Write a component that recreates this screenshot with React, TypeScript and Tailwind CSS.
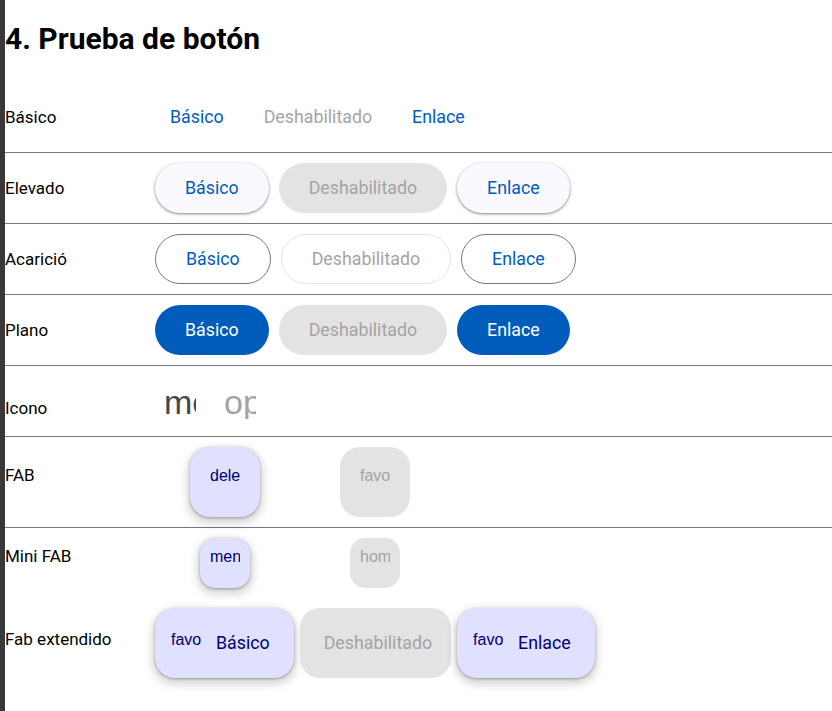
import type { ReactNode } from "react";

const ROBOTO = "font-['Roboto',sans-serif]";
const ICON_FONT = "font-['Liberation_Sans',Arial,sans-serif]";

function Row({ label, children, line = true }: { label: string; children: ReactNode; line?: boolean }) {
  return (
    <div className={line ? "flex items-baseline py-[10px] border-b border-[#77767b]" : "flex items-baseline py-[10px]"}>
      <div className="w-[150px] shrink-0 text-[17px] text-black">{label}</div>
      <div className="flex items-baseline gap-[10px]">{children}</div>
    </div>
  );
}

// material icon font is missing, so the ligature name shows clipped
function Icon({ name, size = "small" }: { name: string; size?: "small" | "big" | "ext" }) {
  if (size === "big")
    return <span className={`block w-[32px] h-[36px] shrink-0 [clip-path:inset(0)] whitespace-nowrap leading-[normal] text-[34px] ${ICON_FONT}`}>{name}</span>;
  if (size === "ext")
    return <span className={`block w-[30px] h-[30px] pt-[3px] shrink-0 [clip-path:inset(0)] whitespace-nowrap leading-[normal] text-[16px] ${ICON_FONT}`}>{name}</span>;
  return <span className={`block w-[30px] h-[30px] shrink-0 [clip-path:inset(0)] whitespace-nowrap leading-[normal] text-[16px] ${ICON_FONT}`}>{name}</span>;
}

const BTN = "inline-flex items-center justify-center h-[50px] rounded-full text-[17.8px] font-normal whitespace-nowrap";
const DISABLED_TEXT = "text-[#a4a4a6]";

function TextBtn({ children, disabled }: { children: ReactNode; disabled?: boolean }) {
  return <button className={`${BTN} px-[15px] ${disabled ? DISABLED_TEXT : "text-[#005cbb]"}`}>{children}</button>;
}

function ElevatedBtn({ children, disabled }: { children: ReactNode; disabled?: boolean }) {
  return disabled ? (
    <button className={`${BTN} px-[30px] bg-[#e3e3e3] ${DISABLED_TEXT}`}>{children}</button>
  ) : (
    <button className={`${BTN} px-[30px] bg-[#f9f9ff] text-[#005cbb] shadow-[0_1px_2px_rgba(0,0,0,0.3),0_1px_3px_1px_rgba(0,0,0,0.15)]`}>{children}</button>
  );
}

function StrokedBtn({ children, disabled }: { children: ReactNode; disabled?: boolean }) {
  return disabled ? (
    <button className={`${BTN} px-[30px] border border-[#e3e3e4] ${DISABLED_TEXT}`}>{children}</button>
  ) : (
    <button className={`${BTN} px-[30px] border border-[#74777f] text-[#005cbb]`}>{children}</button>
  );
}

function FlatBtn({ children, disabled }: { children: ReactNode; disabled?: boolean }) {
  return disabled ? (
    <button className={`${BTN} px-[30px] bg-[#e3e3e3] ${DISABLED_TEXT}`}>{children}</button>
  ) : (
    <button className={`${BTN} px-[30px] bg-[#005cbb] text-white`}>{children}</button>
  );
}

const FAB_SHADOW = "shadow-[0_1px_3px_rgba(0,0,0,0.3),0_4px_8px_3px_rgba(0,0,0,0.15)]";

function Fab({ icon, mini, disabled }: { icon: string; mini?: boolean; disabled?: boolean }) {
  const box = mini ? "w-[50px] h-[50px] rounded-[15px]" : "w-[70px] h-[70px] rounded-[20px]";
  const look = disabled ? `bg-[#e3e3e3] ${DISABLED_TEXT}` : `bg-[#e0e0ff] text-[#00006e] ${FAB_SHADOW}`;
  return (
    <div className="w-[140px] flex justify-center">
      <button className={`inline-flex items-center justify-center ${box} ${look}`}>
        <Icon name={icon} />
      </button>
    </div>
  );
}

export default function App() {
  return (
    <div className={`flex min-h-screen bg-white ${ROBOTO}`}>
      <div className="w-[5px] shrink-0 bg-[#383838]" />
      <div className="flex-1">
        <h1 className="text-[30px] font-bold leading-[36px] mt-[21px] mb-[25px] text-black">4. Prueba de botón</h1>

        <Row label="Básico">
          <TextBtn>Básico</TextBtn>
          <TextBtn disabled>Deshabilitado</TextBtn>
          <TextBtn>Enlace</TextBtn>
        </Row>

        <Row label="Elevado">
          <ElevatedBtn>Básico</ElevatedBtn>
          <ElevatedBtn disabled>Deshabilitado</ElevatedBtn>
          <ElevatedBtn>Enlace</ElevatedBtn>
        </Row>

        <Row label="Acarició">
          <StrokedBtn>Básico</StrokedBtn>
          <StrokedBtn disabled>Deshabilitado</StrokedBtn>
          <StrokedBtn>Enlace</StrokedBtn>
        </Row>

        <Row label="Plano">
          <FlatBtn>Básico</FlatBtn>
          <FlatBtn disabled>Deshabilitado</FlatBtn>
          <FlatBtn>Enlace</FlatBtn>
        </Row>

        <Row label="Icono">
          <button className="inline-flex items-center justify-center w-[50px] h-[50px] rounded-full text-[#44474e]">
            <Icon name="more_vert" size="big" />
          </button>
          <button className={`inline-flex items-center justify-center w-[50px] h-[50px] rounded-full ${DISABLED_TEXT}`}>
            <Icon name="open_in_new" size="big" />
          </button>
        </Row>

        <Row label="FAB">
          <Fab icon="delete" />
          <Fab icon="favorite" disabled />
        </Row>

        <Row label="Mini FAB" line={false}>
          <Fab icon="menu" mini />
          <Fab icon="home" mini disabled />
        </Row>

        <div className="flex items-baseline py-[10px]">
          <div className="w-[150px] shrink-0 text-[17px] text-black">Fab extendido</div>
          <div className="flex items-center gap-[6px]">
            <button className={`inline-flex items-center h-[70px] rounded-[20px] pl-[16px] pr-[24px] gap-[15px] bg-[#e0e0ff] text-[#00006e] text-[17.8px] font-normal ${FAB_SHADOW}`}>
              <Icon name="favorite" size="ext" />
              <span>Básico</span>
            </button>
            <button className={`inline-flex items-center h-[70px] rounded-[20px] pl-[24px] pr-[19px] bg-[#e3e3e3] text-[17.8px] font-normal ${DISABLED_TEXT}`}>
              Deshabilitado
            </button>
            <button className={`inline-flex items-center h-[70px] rounded-[20px] pl-[16px] pr-[24px] gap-[15px] bg-[#e0e0ff] text-[#00006e] text-[17.8px] font-normal ${FAB_SHADOW}`}>
              <Icon name="favorite" size="ext" />
              <span>Enlace</span>
            </button>
          </div>
        </div>
      </div>
    </div>
  );
}
